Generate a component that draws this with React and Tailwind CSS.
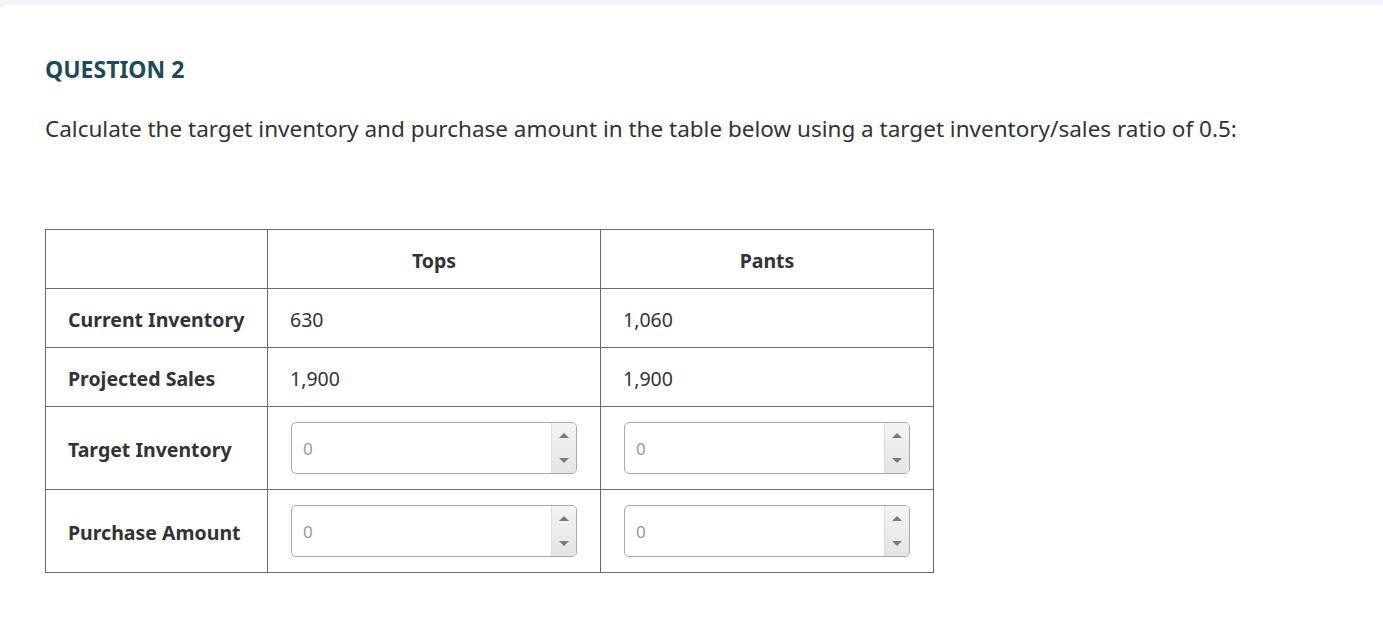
import React from "react";

const font = { fontFamily: '"Noto Sans", "Open Sans", sans-serif' };

function NumberBox() {
  return (
    <div className="flex h-[52px] w-full overflow-hidden rounded-[5px] border border-[#a9a9a9] bg-white">
      <input
        type="text"
        placeholder="0"
        className="min-w-0 flex-1 bg-transparent pl-[11px] pt-[2px] text-[17px] text-[#333] outline-none placeholder:text-[#9a9a9a]"
      />
      <div className="flex w-[25px] flex-col border-l border-[#dcdcdc] bg-gradient-to-b from-[#f4f4f4] to-[#e4e4e4]">
        <div className="flex flex-1 items-center justify-center">
          <span className="h-0 w-0 border-x-[5px] border-b-[5px] border-x-transparent border-b-[#7a7a7a]" />
        </div>
        <div className="flex flex-1 items-center justify-center">
          <span className="h-0 w-0 border-x-[5px] border-t-[5px] border-x-transparent border-t-[#7a7a7a]" />
        </div>
      </div>
    </div>
  );
}

const rows = [
  { label: "Current Inventory", tops: "630", pants: "1,060" },
  { label: "Projected Sales", tops: "1,900", pants: "1,900" },
  { label: "Target Inventory", input: true },
  { label: "Purchase Amount", input: true },
];

export default function App() {
  return (
    <div className="min-h-[637px] bg-[#f3f4f8] pt-[5px]" style={font}>
      <div className="min-h-[632px] rounded-tl-[6px] bg-white pl-[45px] pt-[46px]">
        <h2 className="text-[23px] font-bold leading-[36px] text-[#1d4a5a]">QUESTION 2</h2>
        <p className="mt-[26px] text-[22.5px] leading-[32px] text-[#333]">
          Calculate the target inventory and purchase amount in the table below using a target inventory/sales ratio of 0.5:
        </p>
        <table className="mt-[84px] w-[889px] border-collapse text-[19.5px] text-[#333]">
          <thead>
            <tr className="h-[59px]">
              <th className="w-[222px] border border-[#6b6b6b]"></th>
              <th className="w-[333px] border border-[#6b6b6b] pt-[4px] text-center font-bold">Tops</th>
              <th className="border border-[#6b6b6b] pt-[4px] text-center font-bold">Pants</th>
            </tr>
          </thead>
          <tbody>
            {rows.map((r) => (
              <tr key={r.label} className={r.input ? "h-[83px]" : "h-[59px]"}>
                <td className="border border-[#6b6b6b] px-[22px] pt-[4px] font-bold">{r.label}</td>
                {r.input ? (
                  <>
                    <td className="border border-[#6b6b6b] px-[23px]"><NumberBox /></td>
                    <td className="border border-[#6b6b6b] px-[23px]"><NumberBox /></td>
                  </>
                ) : (
                  <>
                    <td className="border border-[#6b6b6b] px-[22px] pt-[4px]">{r.tops}</td>
                    <td className="border border-[#6b6b6b] px-[22px] pt-[4px]">{r.pants}</td>
                  </>
                )}
              </tr>
            ))}
          </tbody>
        </table>
      </div>
    </div>
  );
}
